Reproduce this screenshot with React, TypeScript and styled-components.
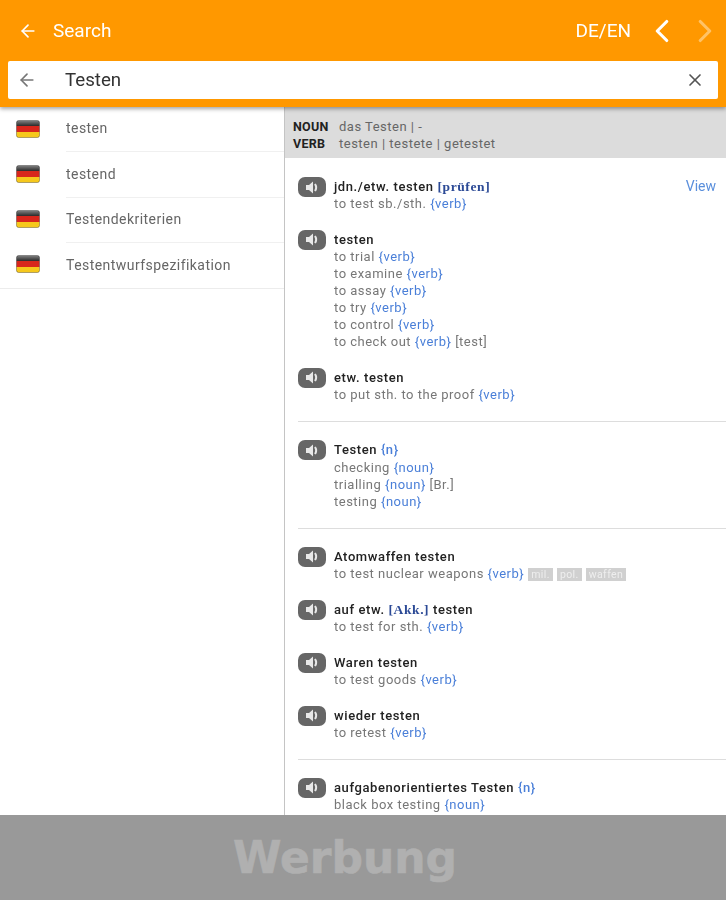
import styled, { createGlobalStyle } from 'styled-components'
import { Fragment } from 'react'
import { FiArrowLeft, FiChevronLeft, FiChevronRight, FiX } from 'react-icons/fi'

const GlobalStyle = createGlobalStyle`
  * { box-sizing: border-box; }
  html, body { margin: 0; padding: 0; background: #fff; }
  body { font-family: Roboto, "Liberation Sans", sans-serif; }
`

const suggestions = ['testen', 'testend', 'Testendekriterien', 'Testentwurfspezifikation']

type Part = { t: string; k?: 'gram' | 'tag' | 'box' }
type Entry = { head: Part[]; lines: Part[][] }

const verb: Part = { t: '{verb}', k: 'tag' }
const noun: Part = { t: '{noun}', k: 'tag' }

const groups: Entry[][] = [
  [
    {
      head: [{ t: 'jdn./etw. testen ' }, { t: '[prüfen]', k: 'gram' }],
      lines: [[{ t: 'to test sb./sth. ' }, verb]]
    },
    {
      head: [{ t: 'testen' }],
      lines: [
        [{ t: 'to trial ' }, verb],
        [{ t: 'to examine ' }, verb],
        [{ t: 'to assay ' }, verb],
        [{ t: 'to try ' }, verb],
        [{ t: 'to control ' }, verb],
        [{ t: 'to check out ' }, verb, { t: ' [test]' }]
      ]
    },
    {
      head: [{ t: 'etw. testen' }],
      lines: [[{ t: 'to put sth. to the proof ' }, verb]]
    }
  ],
  [
    {
      head: [{ t: 'Testen ' }, { t: '{n}', k: 'tag' }],
      lines: [
        [{ t: 'checking ' }, noun],
        [{ t: 'trialling ' }, noun, { t: ' [Br.]' }],
        [{ t: 'testing ' }, noun]
      ]
    }
  ],
  [
    {
      head: [{ t: 'Atomwaffen testen' }],
      lines: [
        [
          { t: 'to test nuclear weapons ' },
          verb,
          { t: 'mil.', k: 'box' },
          { t: 'pol.', k: 'box' },
          { t: 'waffen', k: 'box' }
        ]
      ]
    },
    {
      head: [{ t: 'auf etw. ' }, { t: '[Akk.]', k: 'gram' }, { t: ' testen' }],
      lines: [[{ t: 'to test for sth. ' }, verb]]
    },
    {
      head: [{ t: 'Waren testen' }],
      lines: [[{ t: 'to test goods ' }, verb]]
    },
    {
      head: [{ t: 'wieder testen' }],
      lines: [[{ t: 'to retest ' }, verb]]
    }
  ],
  [
    {
      head: [{ t: 'aufgabenorientiertes Testen ' }, { t: '{n}', k: 'tag' }],
      lines: [[{ t: 'black box testing ' }, noun]]
    }
  ]
]

function Flag() {
  return (
    <FlagIcon viewBox="0 0 24 18">
      <defs>
        <clipPath id="flag-clip">
          <rect x="0.5" y="0.5" width="23" height="17" rx="2" />
        </clipPath>
        <linearGradient id="flag-top" x1="0" y1="0" x2="0" y2="1">
          <stop offset="0" stopColor="#8a8a8a" />
          <stop offset="1" stopColor="#2a2a2a" />
        </linearGradient>
      </defs>
      <g clipPath="url(#flag-clip)">
        <rect width="24" height="6" fill="url(#flag-top)" />
        <rect y="6" width="24" height="6" fill="#d8261c" />
        <rect y="12" width="24" height="6" fill="#f6c81c" />
      </g>
      <rect x="0.5" y="0.5" width="23" height="17" rx="2" fill="none" stroke="#000" strokeOpacity="0.3" />
    </FlagIcon>
  )
}

function Speaker() {
  return (
    <SpeakerButton>
      <svg width="14" height="13" viewBox="0 0 14 13">
        <path d="M1 4h3l4-3.500v12l-4-3.500H1z" fill="#e8e8e8" />
        <path d="M10 3c1.300 2 1.300 5 0 7" fill="none" stroke="#e8e8e8" strokeWidth="2" />
      </svg>
    </SpeakerButton>
  )
}

function Parts({ parts }: { parts: Part[] }) {
  return (
    <>
      {parts.map((p, i) =>
        p.k === 'gram' ? (
          <Gram key={i}>{p.t}</Gram>
        ) : p.k === 'tag' ? (
          <Tag key={i}>{p.t}</Tag>
        ) : p.k === 'box' ? (
          <Box key={i}>{p.t}</Box>
        ) : (
          <Fragment key={i}>{p.t}</Fragment>
        )
      )}
    </>
  )
}

export default function App() {
  return (
    <>
      <GlobalStyle />
      <Page>
        <Header>
          <Toolbar>
            <FiArrowLeft size={20} color="#fff" />
            <Title>Search</Title>
            <Lang>DE/EN</Lang>
            <Nav>
              <FiChevronLeft size={38} color="#fff" />
              <FiChevronRight size={38} color="#ffc266" />
            </Nav>
          </Toolbar>
          <SearchField>
            <FiArrowLeft size={20} color="#777" />
            <SearchText>Testen</SearchText>
            <FiX size={20} color="#555" />
          </SearchField>
        </Header>

        <Body>
          <Sidebar>
            {suggestions.map((s, i) => (
              <Suggestion key={s} $last={i === suggestions.length - 1}>
                <Flag />
                <SuggestionText $last={i === suggestions.length - 1}>{s}</SuggestionText>
              </Suggestion>
            ))}
          </Sidebar>

          <Results>
            <Conjugation>
              <ConjLabel>NOUN</ConjLabel>
              <span>das Testen | -</span>
              <ConjLabel>VERB</ConjLabel>
              <span>testen | testete | getestet</span>
            </Conjugation>

            {groups.map((group, gi) => (
              <Group key={gi}>
                {group.map((entry, ei) => (
                  <EntryRow key={ei}>
                    <Speaker />
                    <EntryText>
                      <Head>
                        <Parts parts={entry.head} />
                      </Head>
                      {entry.lines.map((line, li) => (
                        <Line key={li}>
                          <Parts parts={line} />
                        </Line>
                      ))}
                    </EntryText>
                    {gi === 0 && ei === 0 && <ViewLink>View</ViewLink>}
                  </EntryRow>
                ))}
              </Group>
            ))}
          </Results>
        </Body>

        <AdBar>
          <AdText>Werbung</AdText>
        </AdBar>
      </Page>
    </>
  )
}

const Page = styled.div`
  display: flex;
  flex-direction: column;
  width: 726px;
  height: 900px;
  overflow: hidden;
  filter: blur(0.6px);
`

const Header = styled.header`
  flex: none;
  height: 107px;
  background: #ff9800;
  box-shadow: 0 2px 4px rgba(0, 0, 0, 0.35);
  position: relative;
  z-index: 2;
`

const Toolbar = styled.div`
  display: flex;
  align-items: center;
  height: 61px;
  padding: 0 2px 0 18px;
`

const Title = styled.span`
  margin-left: 15px;
  color: #fff;
  font-size: 19px;
`

const Lang = styled.span`
  margin-left: auto;
  color: #fff;
  font-size: 19px;
`

const Nav = styled.div`
  display: flex;
  align-items: center;
  gap: 5px;
  margin-left: 12px;
`

const SearchField = styled.div`
  display: flex;
  align-items: center;
  height: 38px;
  margin: 0 8px;
  padding: 0 13px 0 9px;
  background: #fff;
  border-radius: 2px;
`

const SearchText = styled.span`
  flex: 1;
  margin-left: 28px;
  color: #333;
  font-size: 18.700px;
`

const Body = styled.div`
  flex: 1;
  min-height: 0;
  display: flex;
`

const Sidebar = styled.aside`
  flex: none;
  width: 284px;
`

const Suggestion = styled.div<{ $last: boolean }>`
  display: flex;
  align-items: center;
  height: 45.4px;
  padding-left: 16px;
  border-bottom: ${p => (p.$last ? '1px solid #ececec' : 'none')};
`

const FlagIcon = styled.svg`
  flex: none;
  width: 24px;
  height: 18px;
  margin-bottom: 2px;
`

const SuggestionText = styled.div<{ $last: boolean }>`
  display: flex;
  align-items: center;
  align-self: stretch;
  flex: 1;
  margin-left: 26px;
  padding-bottom: 1.500px;
  color: #666;
  font-size: 14px;
  letter-spacing: 0.45px;
  border-bottom: ${p => (p.$last ? 'none' : '1px solid #f0f0f0')};
`

const Results = styled.main`
  flex: 1;
  min-width: 0;
  overflow: hidden;
  border-left: 1px solid #c4c4c4;
`

const Conjugation = styled.div`
  display: grid;
  grid-template-columns: 46px 1fr;
  align-content: center;
  height: 51px;
  margin-bottom: 1px;
  padding: 5px 0 0 8px;
  background: #dcdcdc;
  color: #666;
  font-size: 13px;
  letter-spacing: 0.5px;
  line-height: 17px;
`

const ConjLabel = styled.b`
  color: #222;
  font-size: 12.500px;
  letter-spacing: 0.3px;
  font-weight: 700;
`

const Group = styled.section`
  display: flex;
  flex-direction: column;
  gap: 18.67px;
  margin-left: 13px;
  padding: 19px 0 18px;
  border-bottom: 1px solid #ddd;

  &:last-child {
    border-bottom: none;
  }
`

const EntryRow = styled.div`
  display: flex;
  align-items: flex-start;
`

const SpeakerButton = styled.div`
  flex: none;
  display: flex;
  align-items: center;
  justify-content: center;
  width: 28px;
  height: 20px;
  margin: -1px 8px 0 0;
  background: #666;
  border-radius: 7px;
`

const EntryText = styled.div`
  flex: 1;
  min-width: 0;
`

const Head = styled.div`
  color: #222;
  font-size: 13px;
  font-weight: 500;
  letter-spacing: 0.6px;
  line-height: 17.33px;
`

const Line = styled.div`
  color: #777;
  font-size: 13px;
  letter-spacing: 0.5px;
  line-height: 17px;
  white-space: nowrap;
`

const Gram = styled.span`
  color: #2c4a96;
  font-family: "Liberation Serif", serif;
  font-size: 13.500px;
  font-weight: 700;
`

const Tag = styled.span`
  color: #4a7fd8;
`

const Box = styled.span`
  display: inline-block;
  margin-left: 4px;
  padding: 0 3px;
  background: #d0d0d0;
  color: #eee;
  font-size: 10.500px;
  letter-spacing: 0.4px;
  line-height: 13px;
`

const ViewLink = styled.span`
  margin-right: 10px;
  color: #5a8fdc;
  font-size: 14px;
  line-height: 17px;
`

const AdBar = styled.footer`
  flex: none;
  height: 85px;
  display: flex;
  align-items: center;
  justify-content: center;
  background: #999;
`

const AdText = styled.span`
  margin-left: -36px;
  color: #b0b0b0;
  font-family: "DejaVu Sans", sans-serif;
  font-size: 44px;
  font-weight: 700;
  -webkit-text-stroke: 0.6px #b0b0b0;
`
